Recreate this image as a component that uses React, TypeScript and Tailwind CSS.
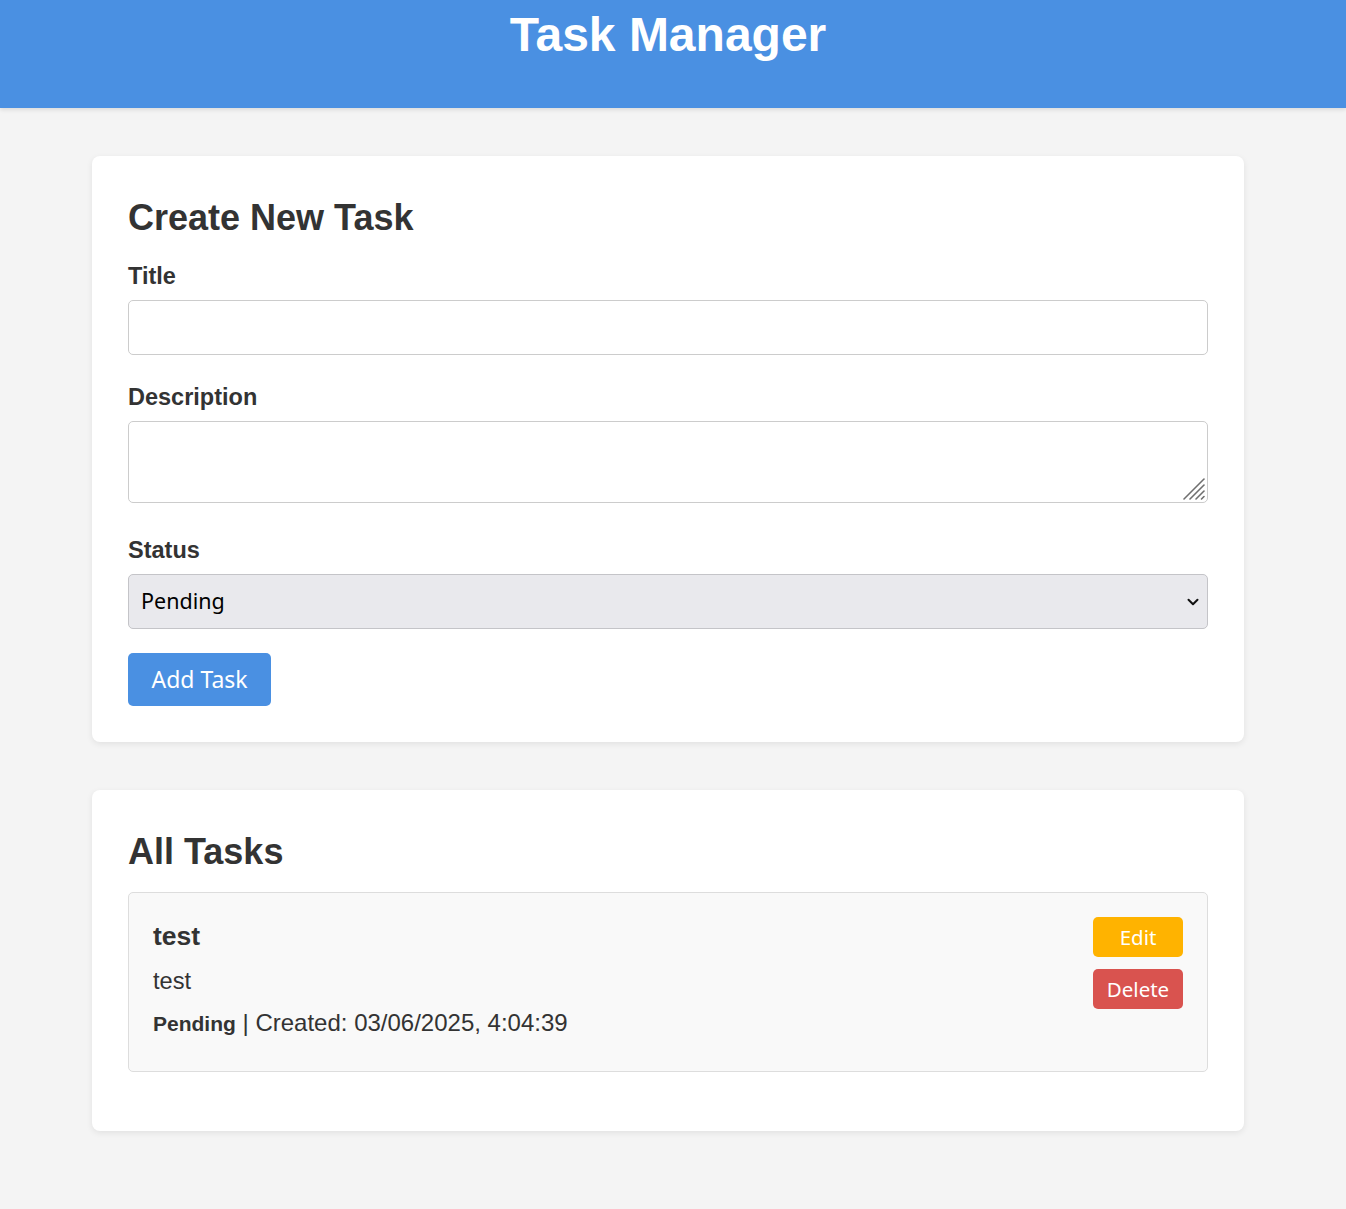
import React from "react";

const arial = { fontFamily: '"Liberation Sans", Arial, sans-serif' };
const ui = { fontFamily: '"Noto Sans", "Open Sans", sans-serif' };

export default function App() {
  return (
    <div className="min-h-[1209px] bg-[#f4f4f4] text-[#333]" style={arial}>
      <header className="h-[108px] bg-[#4a90e2] pt-[7px] pr-[10px] text-center shadow-[0_2px_4px_rgba(0,0,0,0.1)]">
        <h1 className="text-[48px] font-bold leading-[56px] text-white">Task Manager</h1>
      </header>

      <main className="ml-[92px] flex w-[1152px] flex-col gap-[48px] pt-[48px] pb-[78px]">
        <section className="rounded-[8px] bg-white px-[36px] pt-[42px] pb-[36px] shadow-[0_2px_6px_rgba(0,0,0,0.08)]">
          <h2 className="text-[36px] font-bold leading-[40px]">Create New Task</h2>

          <div className="mt-[24px]">
            <label className="block text-[23.5px] font-bold leading-[28px]">Title</label>
            <input
              type="text"
              className="mt-[10px] block h-[55px] w-full rounded-[5px] border border-[#ccc] bg-white px-[12px] outline-none"
            />
          </div>

          <div className="mt-[28px]">
            <label className="block text-[23.5px] font-bold leading-[28px]">Description</label>
            <div className="relative mt-[10px]">
              <textarea className="block h-[82px] w-full resize-none rounded-[5px] border border-[#ccc] bg-white px-[12px] py-[8px] outline-none" />
              <svg
                className="pointer-events-none absolute right-[2px] bottom-[2px]"
                width="24"
                height="24"
                viewBox="0 0 24 24"
              >
                <g stroke="#6f6f6f" strokeWidth="1.6" strokeLinecap="round">
                  <path d="M2 22 L22 2" />
                  <path d="M8 22 L22 8" />
                  <path d="M14 22 L22 14" />
                  <path d="M19.5 22 L22 19.5" />
                </g>
              </svg>
            </div>
          </div>

          <div className="mt-[33px]">
            <label className="block text-[23.5px] font-bold leading-[28px]">Status</label>
            <div className="relative mt-[10px]">
              <select
                className="block h-[55px] w-full appearance-none rounded-[5px] border border-[#c4c4c8] bg-[#e9e9ed] px-[12px] text-[21.5px] text-black outline-none"
                style={ui}
                defaultValue="pending"
              >
                <option value="pending">Pending</option>
                <option value="in-progress">In Progress</option>
                <option value="completed">Completed</option>
              </select>
              <svg
                className="pointer-events-none absolute right-[8px] top-1/2 -translate-y-1/2"
                width="14"
                height="14"
                viewBox="0 0 14 14"
              >
                <path d="M2.5 4.8 L7 9.3 L11.5 4.8" fill="none" stroke="#111" strokeWidth="2" strokeLinecap="round" strokeLinejoin="round" />
              </svg>
            </div>
          </div>

          <button
            className="mt-[24px] h-[53px] rounded-[5px] bg-[#4a90e2] px-[23.5px] text-[23px] text-white"
            style={ui}
          >
            Add Task
          </button>
        </section>

        <section className="rounded-[8px] bg-white px-[36px] pt-[42px] pb-[59px] shadow-[0_2px_6px_rgba(0,0,0,0.08)]">
          <h2 className="text-[36px] font-bold leading-[40px]">All Tasks</h2>

          <div className="mt-[20px] flex items-start justify-between rounded-[5px] border border-[#ddd] bg-[#f9f9f9] px-[24px] pt-[24px] pb-[33px]">
            <div>
              <h3 className="mt-[3px] text-[26.5px] font-bold leading-[32px]">test</h3>
              <p className="mt-[15px] text-[23.6px] leading-[28px]">test</p>
              <p className="mt-[14px] text-[24px] leading-[28px]">
                <span className="text-[21px] font-bold">Pending</span> | Created: 03/06/2025, 4:04:39
              </p>
            </div>
            <div className="flex w-[90px] flex-col items-stretch gap-[12px]" style={ui}>
              <button className="h-[40px] rounded-[5px] bg-[#ffb300] text-[20.5px] text-white">Edit</button>
              <button className="h-[40px] rounded-[5px] bg-[#d9534f] text-[20.5px] text-white">Delete</button>
            </div>
          </div>
        </section>
      </main>
    </div>
  );
}
